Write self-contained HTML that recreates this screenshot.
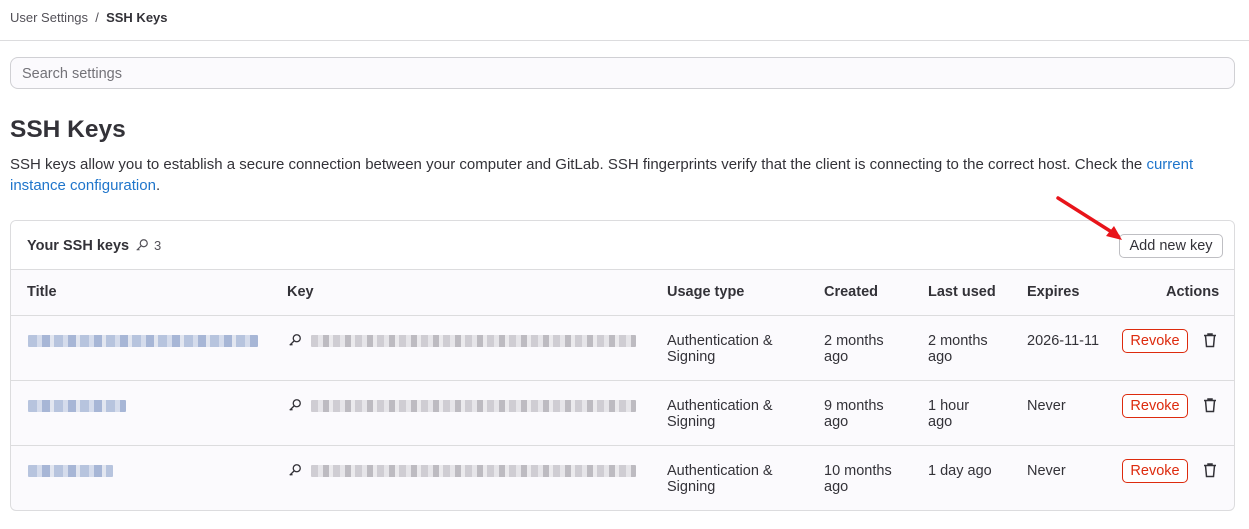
<!DOCTYPE html>
<html><head><style>
*{box-sizing:border-box;margin:0;padding:0}
body{width:1249px;height:529px;background:#fff;font-family:"Liberation Sans",sans-serif;color:#333238;overflow:hidden;position:relative}
.a{position:absolute}
.bc{left:10px;top:10px;font-size:13px;color:#535158}
.bc b{color:#333238}
.hr{left:0;top:40px;width:1249px;height:1px;background:#dcdcde}
.search{left:10px;top:57px;width:1225px;height:32px;border:1px solid #d0d0d4;border-radius:8px;background:#fbfafd;font-size:14.5px;color:#737278;padding:8px 11px}
h1{position:absolute;left:10px;top:116px;font-size:24.5px;font-weight:bold;color:#333238}
.desc{left:10px;top:154px;width:1210px;font-size:15px;line-height:21px;color:#333238}
.desc span{color:#1f75cb}
.card{left:10px;top:220px;width:1225px;height:291px;border:1px solid #dcdcde;border-radius:6px;overflow:hidden;background:#fbfafd}
.ch{position:absolute;left:0;top:0;width:100%;height:49px;background:#fff;border-bottom:1px solid #dcdcde}
.t{position:absolute;font-size:14.5px;line-height:16px}
.th{font-weight:bold}
.row{position:absolute;left:0;width:100%;height:1px;background:#dcdcde}
.blur{position:absolute;height:12px;border-radius:1px}
.bt{background:repeating-linear-gradient(90deg,#b7c4de 0 9px,#d5dcec 9px 14px,#a7b6d6 14px 22px,#e2e6f0 22px 26px)}
.bk{background:repeating-linear-gradient(90deg,#cfcdd3 0 7px,#e6e5e9 7px 12px,#bdbbc1 12px 18px,#ebeaed 18px 22px)}
.btn{position:absolute;border:1px solid #dd2b0e;border-radius:5px;color:#dd2b0e;font-size:14.5px;height:24px;width:66px;text-align:center;line-height:22px;background:#fff}
</style></head><body>
<div class="a bc">User Settings &nbsp;/&nbsp; <b>SSH Keys</b></div>
<div class="a hr"></div>
<div class="a search">Search settings</div>
<h1>SSH Keys</h1>
<div class="a desc">SSH keys allow you to establish a secure connection between your computer and GitLab. SSH fingerprints verify that the client is connecting to the correct host. Check the <span>current instance configuration</span>.</div>
<div class="a card">
 <div class="ch">
  <div class="t th" style="left:16px;top:17px">Your SSH keys</div>
  <svg class="a" style="left:124px;top:17px" width="14" height="14" viewBox="0 0 16 16" fill="none" stroke="#535158" stroke-width="1.4"><circle cx="10" cy="6" r="4"/><path d="M7 9 2 14M3.5 12.5l1.5 1.5"/></svg>
  <div class="t" style="left:143px;top:17px;font-size:13px;color:#535158">3</div>
  <div class="a" style="left:1108px;top:13px;width:104px;height:24px;border:1px solid #bfbfc3;border-radius:5px;font-size:14.5px;text-align:center;line-height:22px;color:#333238">Add new key</div>
 </div>
 <div class="t th" style="left:16px;top:63px">Title</div>
 <div class="t th" style="left:276px;top:63px">Key</div>
 <div class="t th" style="left:656px;top:63px">Usage type</div>
 <div class="t th" style="left:813px;top:63px">Created</div>
 <div class="t th" style="left:917px;top:63px">Last used</div>
 <div class="t th" style="left:1016px;top:63px">Expires</div>
 <div class="t th" style="left:1155px;top:63px">Actions</div>
 <div class="row" style="top:94px"></div>
 <div class="row" style="top:159px"></div>
 <div class="row" style="top:224px"></div>
 <div class="blur bt" style="left:17px;top:114px;width:230px"></div>
 <div class="blur bk" style="left:300px;top:114px;width:325px"></div>
 <div class="blur bt" style="left:17px;top:179px;width:98px"></div>
 <div class="blur bk" style="left:300px;top:179px;width:325px"></div>
 <div class="blur bt" style="left:17px;top:244px;width:85px"></div>
 <div class="blur bk" style="left:300px;top:244px;width:325px"></div>
 <svg class="a" style="left:277px;top:112px" width="14" height="14" viewBox="0 0 16 16" fill="none" stroke="#333238" stroke-width="1.5"><circle cx="10" cy="6" r="4"/><path d="M7 9 2 14M3.5 12.5l1.5 1.5"/></svg>
 <svg class="a" style="left:277px;top:177px" width="14" height="14" viewBox="0 0 16 16" fill="none" stroke="#333238" stroke-width="1.5"><circle cx="10" cy="6" r="4"/><path d="M7 9 2 14M3.5 12.5l1.5 1.5"/></svg>
 <svg class="a" style="left:277px;top:242px" width="14" height="14" viewBox="0 0 16 16" fill="none" stroke="#333238" stroke-width="1.5"><circle cx="10" cy="6" r="4"/><path d="M7 9 2 14M3.5 12.5l1.5 1.5"/></svg>

 <div class="t" style="left:656px;top:112px">Authentication &amp;<br>Signing</div>
 <div class="t" style="left:813px;top:112px">2 months<br>ago</div>
 <div class="t" style="left:917px;top:112px">2 months<br>ago</div>
 <div class="t" style="left:1016px;top:112px">2026-11-11</div>
 <div class="btn" style="left:1111px;top:108px">Revoke</div>

 <div class="t" style="left:656px;top:177px">Authentication &amp;<br>Signing</div>
 <div class="t" style="left:813px;top:177px">9 months<br>ago</div>
 <div class="t" style="left:917px;top:177px">1 hour<br>ago</div>
 <div class="t" style="left:1016px;top:177px">Never</div>
 <div class="btn" style="left:1111px;top:173px">Revoke</div>

 <div class="t" style="left:656px;top:242px">Authentication &amp;<br>Signing</div>
 <div class="t" style="left:813px;top:242px">10 months<br>ago</div>
 <div class="t" style="left:917px;top:242px">1 day ago</div>
 <div class="t" style="left:1016px;top:242px">Never</div>
 <div class="btn" style="left:1111px;top:238px">Revoke</div>

 <svg class="a" style="left:1191px;top:111px" width="16" height="16" viewBox="0 0 16 16" fill="none" stroke="#333238" stroke-width="1.5"><path d="M2 3.5h12M6 3.5V2h4v1.5M3.5 3.5l1 11h7l1-11"/></svg>
 <svg class="a" style="left:1191px;top:176px" width="16" height="16" viewBox="0 0 16 16" fill="none" stroke="#333238" stroke-width="1.5"><path d="M2 3.5h12M6 3.5V2h4v1.5M3.5 3.5l1 11h7l1-11"/></svg>
 <svg class="a" style="left:1191px;top:241px" width="16" height="16" viewBox="0 0 16 16" fill="none" stroke="#333238" stroke-width="1.5"><path d="M2 3.5h12M6 3.5V2h4v1.5M3.5 3.5l1 11h7l1-11"/></svg>
</div>
<svg class="a" style="left:1050px;top:190px" width="80" height="60"><path d="M8 8 L68 46" stroke="#e8141a" stroke-width="3.5" stroke-linecap="round"/><path d="M72 50 L56 46 L64 36 Z" fill="#e8141a"/></svg>
</body></html>
